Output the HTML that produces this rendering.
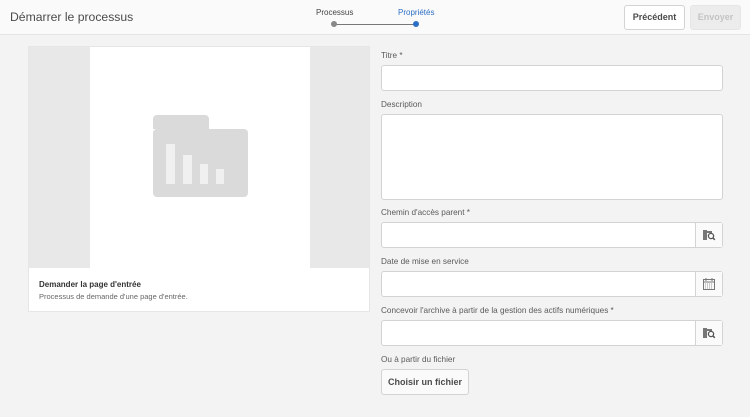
<!DOCTYPE html>
<html><head><meta charset="utf-8"><style>
*{box-sizing:border-box;margin:0;padding:0}
body{width:750px;height:417px;background:#f3f3f3;font-family:"Liberation Sans",sans-serif;position:relative;overflow:hidden;color:#4b4b4b}
.hdr{position:absolute;left:0;top:0;width:750px;height:35px;background:#fafafa;border-bottom:1px solid #e4e4e4}
.a{position:absolute}
.lbl{position:absolute;left:381px;font-size:8.2px;color:#5a5a5a}
.inp{position:absolute;left:381px;width:342px;background:#fff;border:1px solid #d3d3d3;border-radius:3px}
.ib{position:absolute;right:0;top:0;bottom:0;width:27px;border-left:1px solid #d3d3d3;background:#fafafa;display:flex;align-items:center;justify-content:center}
</style></head><body>
<div class="hdr">
<div class="a" style="left:10px;top:10px;font-size:12.2px;color:#4b4b4b">Démarrer le processus</div>
<div class="a" style="left:316px;top:8px;font-size:8px;color:#444">Processus</div>
<div class="a" style="left:398px;top:8px;font-size:8px;color:#2d6fc4">Propriétés</div>
<div class="a" style="left:336px;top:23.5px;width:80px;height:1px;background:#777"></div>
<div class="a" style="left:331px;top:21px;width:6px;height:6px;border-radius:50%;background:#888"></div>
<div class="a" style="left:413px;top:21px;width:6px;height:6px;border-radius:50%;background:#2d6fc4"></div>
<div class="a" style="left:624px;top:5px;width:61px;height:25px;border:1px solid #d3d3d3;border-radius:3px;background:#fff;font-size:9px;font-weight:bold;color:#4b4b4b;text-align:center;line-height:23px">Précédent</div>
<div class="a" style="left:690px;top:5px;width:51px;height:25px;border-radius:3px;background:#ececec;border:1px solid #e6e6e6;font-size:9px;font-weight:bold;color:#c4c4c4;text-align:center;line-height:23px">Envoyer</div>
</div>
<div class="a" style="left:28px;top:46px;width:342px;height:266px;background:#fff;border:1px solid #e6e6e6">
<div class="a" style="left:0;top:0;width:340px;height:221px;background:#e8e8e8"></div>
<div class="a" style="left:61px;top:0;width:220px;height:221px;background:#fff"></div>
<div class="a" style="left:124px;top:68px;width:56px;height:14px;background:#dadada;border-radius:4px 4px 0 0"></div>
<div class="a" style="left:124px;top:82px;width:95px;height:68px;background:#dadada;border-radius:4px"></div>
<div class="a" style="left:137px;top:97px;width:9px;height:40px;background:#f0f0f0"></div>
<div class="a" style="left:154px;top:108px;width:9px;height:29px;background:#f0f0f0"></div>
<div class="a" style="left:171px;top:117px;width:8px;height:20px;background:#f0f0f0"></div>
<div class="a" style="left:187px;top:122px;width:8px;height:15px;background:#f0f0f0"></div>
<div class="a" style="left:10px;top:233px;font-size:8px;font-weight:bold;color:#333">Demander la page d'entrée</div>
<div class="a" style="left:10px;top:245px;font-size:7.5px;color:#666">Processus de demande d'une page d'entrée.</div>
</div>
<div class="lbl" style="top:51px">Titre *</div>
<div class="inp" style="top:65px;height:26px"></div>
<div class="lbl" style="top:100px">Description</div>
<div class="inp" style="top:114px;height:86px"></div>
<div class="lbl" style="top:208px">Chemin d'accès parent *</div>
<div class="inp" style="top:222px;height:26px"><div class="ib"><svg width="14" height="12" viewBox="0 0 14 12"><path d="M1 1h4v1h5v2H5v7H1z" fill="#777"/><circle cx="9" cy="7" r="2.6" fill="none" stroke="#555" stroke-width="1.3"/><path d="M10.8 8.8l2 2" stroke="#555" stroke-width="1.5"/></svg></div></div>
<div class="lbl" style="top:257px">Date de mise en service</div>
<div class="inp" style="top:271px;height:26px"><div class="ib"><svg width="12" height="12" viewBox="0 0 12 12"><rect x="0.5" y="1.5" width="11" height="10" fill="none" stroke="#777"/><path d="M0.5 4h11" stroke="#777"/><path d="M3 0v3M9 0v3" stroke="#777"/><path d="M2 6h8M2 8h8M2 10h8" stroke="#999" stroke-dasharray="1 1"/></svg></div></div>
<div class="lbl" style="top:306px">Concevoir l'archive à partir de la gestion des actifs numériques *</div>
<div class="inp" style="top:320px;height:26px"><div class="ib"><svg width="14" height="12" viewBox="0 0 14 12"><path d="M1 1h4v1h5v2H5v7H1z" fill="#777"/><circle cx="9" cy="7" r="2.6" fill="none" stroke="#555" stroke-width="1.3"/><path d="M10.8 8.8l2 2" stroke="#555" stroke-width="1.5"/></svg></div></div>
<div class="lbl" style="top:355px">Ou à partir du fichier</div>
<div class="a" style="left:381px;top:369px;width:88px;height:26px;border:1px solid #d3d3d3;border-radius:3px;background:#fafafa;font-size:9px;font-weight:bold;color:#4b4b4b;text-align:center;line-height:24px">Choisir un fichier</div>
</body></html>
